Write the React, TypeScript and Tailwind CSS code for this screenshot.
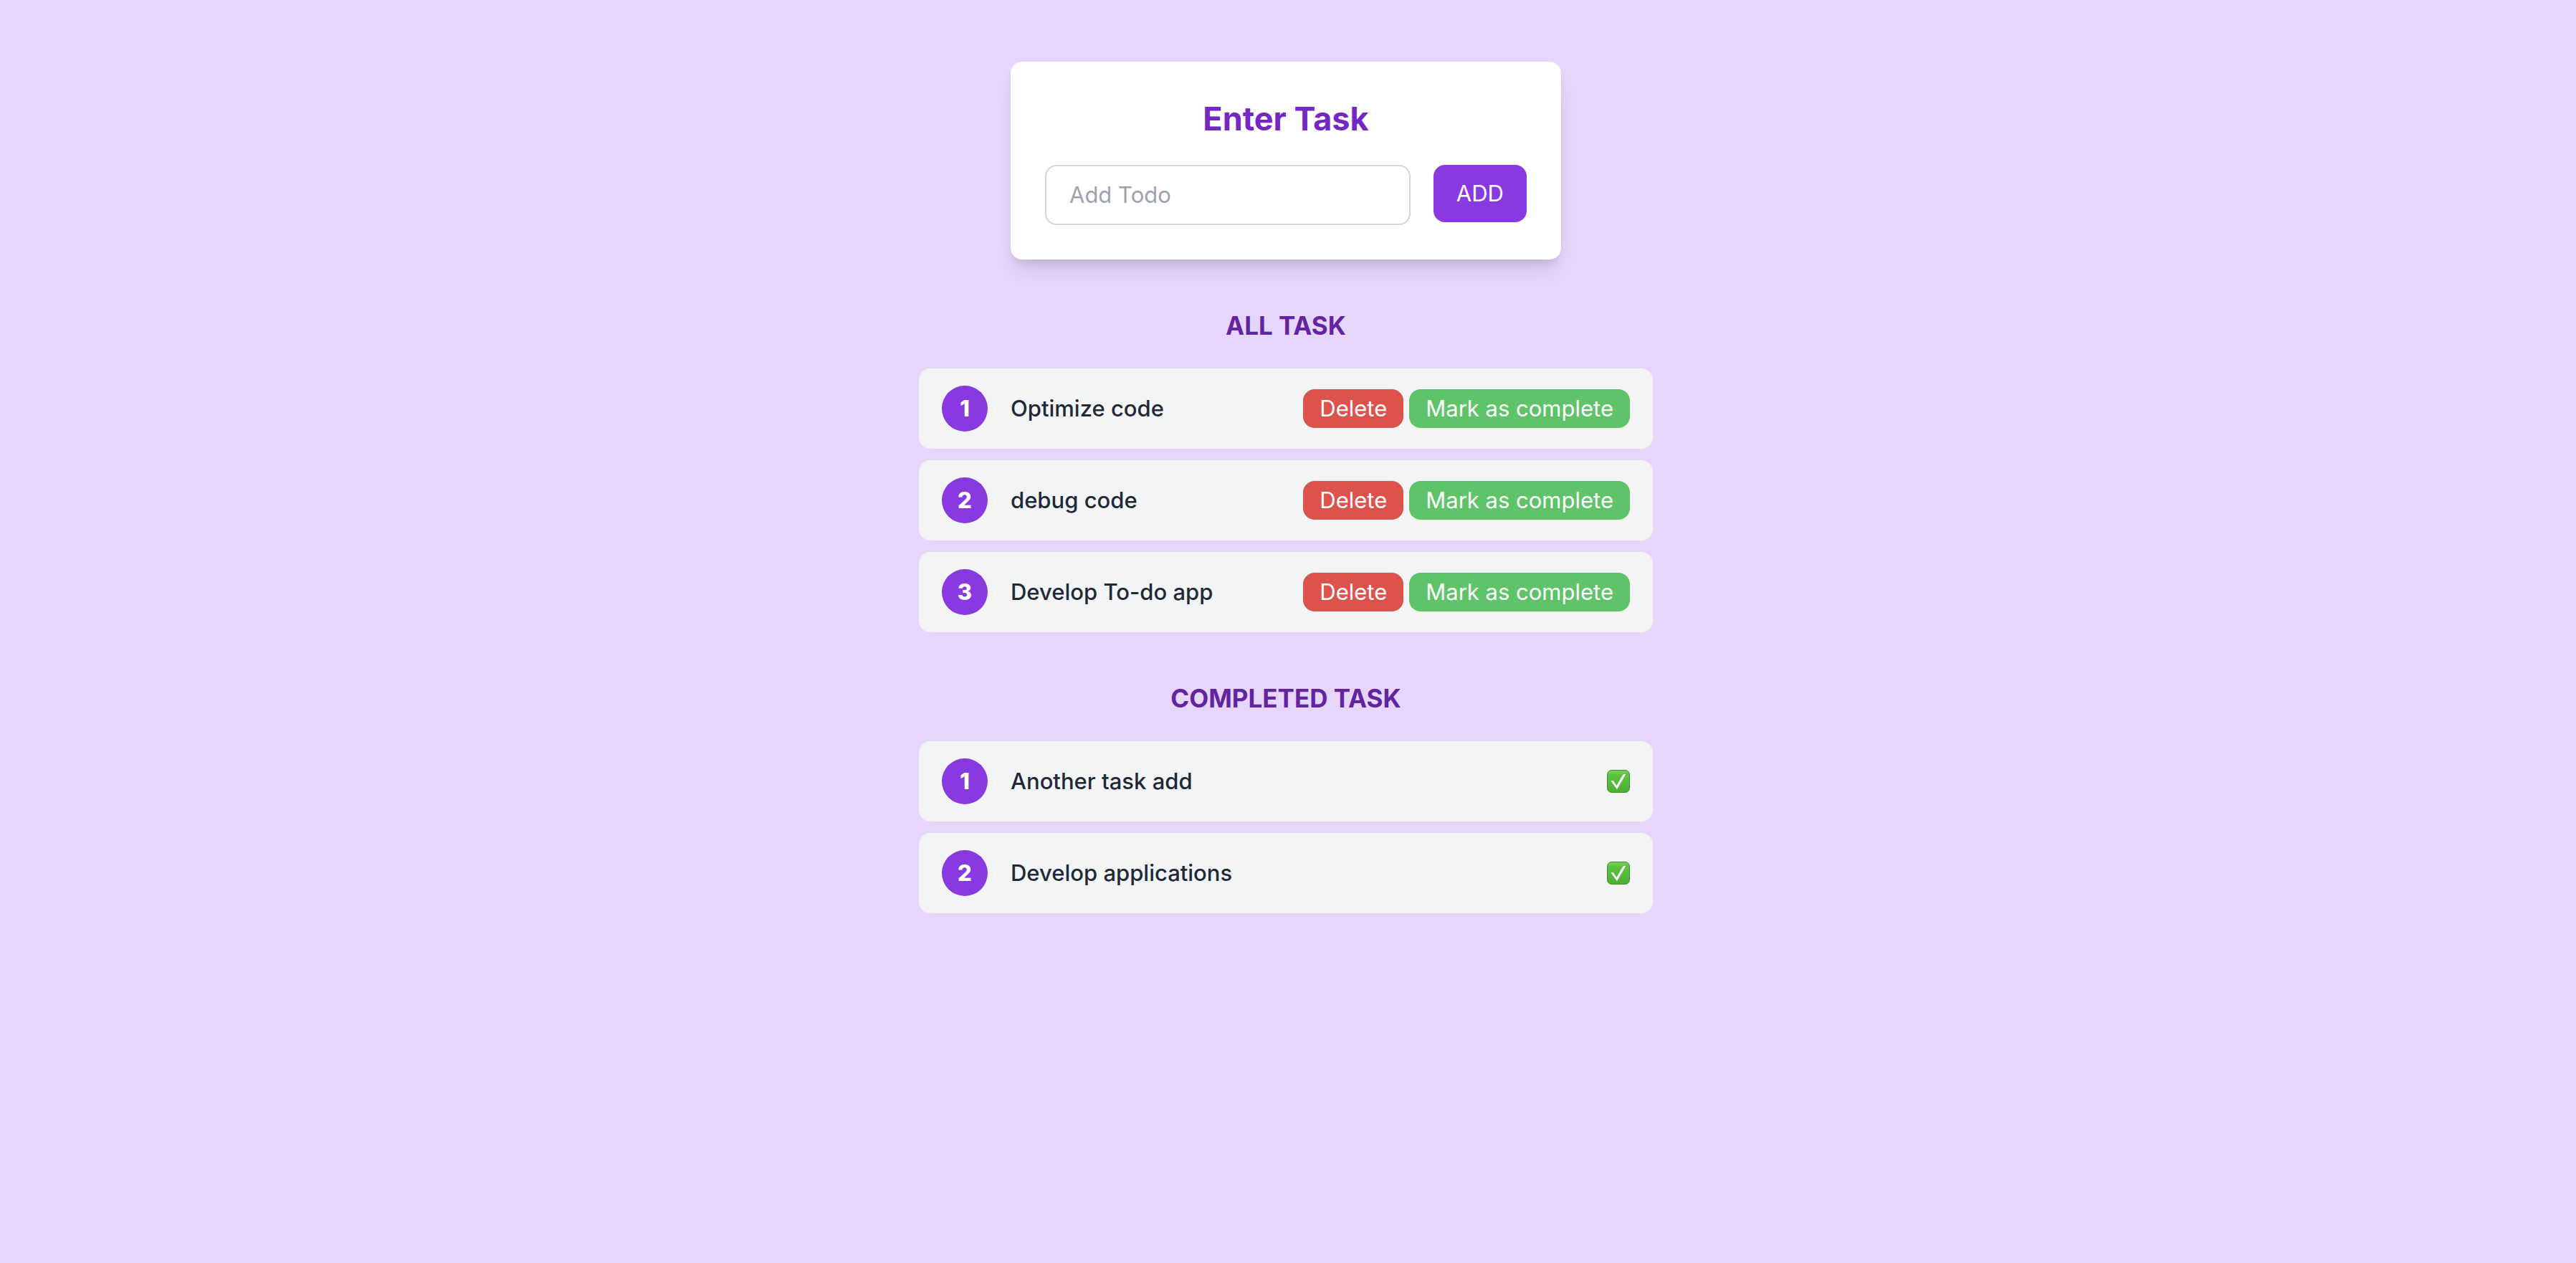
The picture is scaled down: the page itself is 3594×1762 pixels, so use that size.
import { useId, type ReactNode } from "react";

const tasks = ["Optimize code", "debug code", "Develop To-do app"];
const completed = ["Another task add", "Develop applications"];

function CheckMark() {
  const id = useId();
  return (
    <svg viewBox="0 0 32 32" className="size-8" role="img" aria-label="Completed">
      <defs>
        <linearGradient id={id} x1="0" y1="0" x2="0" y2="1">
          <stop offset="0" stopColor="#7fd05f" />
          <stop offset="0.2" stopColor="#5cc440" />
          <stop offset="1" stopColor="#4fae33" />
        </linearGradient>
      </defs>
      <rect x="0.5" y="0.5" width="31" height="31" rx="6" fill={`url(#${id})`} stroke="#3f8f2c" strokeWidth="1" />
      <path
        d="M5.3 14.9h3.4L13.5 22 22.2 6.9c.4-.7.9-.9 1.6-.9h2.4L14 27.2z"
        fill="#ffffff"
      />
    </svg>
  );
}

function TaskRow({ number, name, children }: { number: number; name: string; children: ReactNode }) {
  return (
    <li className="flex items-center gap-8 rounded-2xl bg-gray-100 px-8 py-6">
      <span className="flex size-16 shrink-0 items-center justify-center rounded-full bg-[#8839df] font-extrabold text-white">
        {number}
      </span>
      <span className="flex-1 font-medium text-[#202937]">{name}</span>
      <div className="flex items-center gap-2">{children}</div>
    </li>
  );
}

function TaskSection({ title, children }: { title: string; children: ReactNode }) {
  return (
    <section className="mt-16 w-full max-w-5xl">
      <h2 className="mb-8 text-center text-[35px] leading-[56px] font-bold text-[#6224a1]">{title}</h2>
      <ul className="flex flex-col gap-4">{children}</ul>
    </section>
  );
}

export default function App() {
  return (
    <main className="flex min-h-screen flex-col items-center bg-[#e6d6fb] pt-[86px] pr-1.5 pb-16 font-['Inter',sans-serif] text-[31px] leading-[48px]">
      <form
        className="w-full max-w-3xl rounded-2xl bg-white p-12 shadow-[0_20px_30px_-6px_rgba(0,0,0,0.1),0_8px_12px_-4px_rgba(0,0,0,0.1)]"
        onSubmit={(event) => event.preventDefault()}
      >
        <h1 className="mb-8 text-center text-[45px] leading-[64px] font-bold text-[#7427c5]">Enter Task</h1>
        <div className="flex items-start gap-8">
          <input
            type="text"
            aria-label="Add Todo"
            placeholder="Add Todo"
            className="min-w-0 flex-1 rounded-2xl border-2 border-[#d1d5db] px-8 py-4 text-[#202937] placeholder:text-[#9ca3af]"
          />
          <button type="submit" className="rounded-2xl bg-[#8839df] px-8 py-4 text-white">
            ADD
          </button>
        </div>
      </form>

      <TaskSection title="ALL TASK">
        {tasks.map((name, index) => (
          <TaskRow key={name} number={index + 1} name={name}>
            <button type="button" className="rounded-2xl bg-[#dd524c] px-[23px] py-2 leading-[38px] text-white">
              Delete
            </button>
            <button type="button" className="rounded-2xl bg-[#5fc36a] px-[23px] py-2 leading-[38px] text-white">
              Mark as complete
            </button>
          </TaskRow>
        ))}
      </TaskSection>

      <TaskSection title="COMPLETED TASK">
        {completed.map((name, index) => (
          <TaskRow key={name} number={index + 1} name={name}>
            <CheckMark />
          </TaskRow>
        ))}
      </TaskSection>
    </main>
  );
}
